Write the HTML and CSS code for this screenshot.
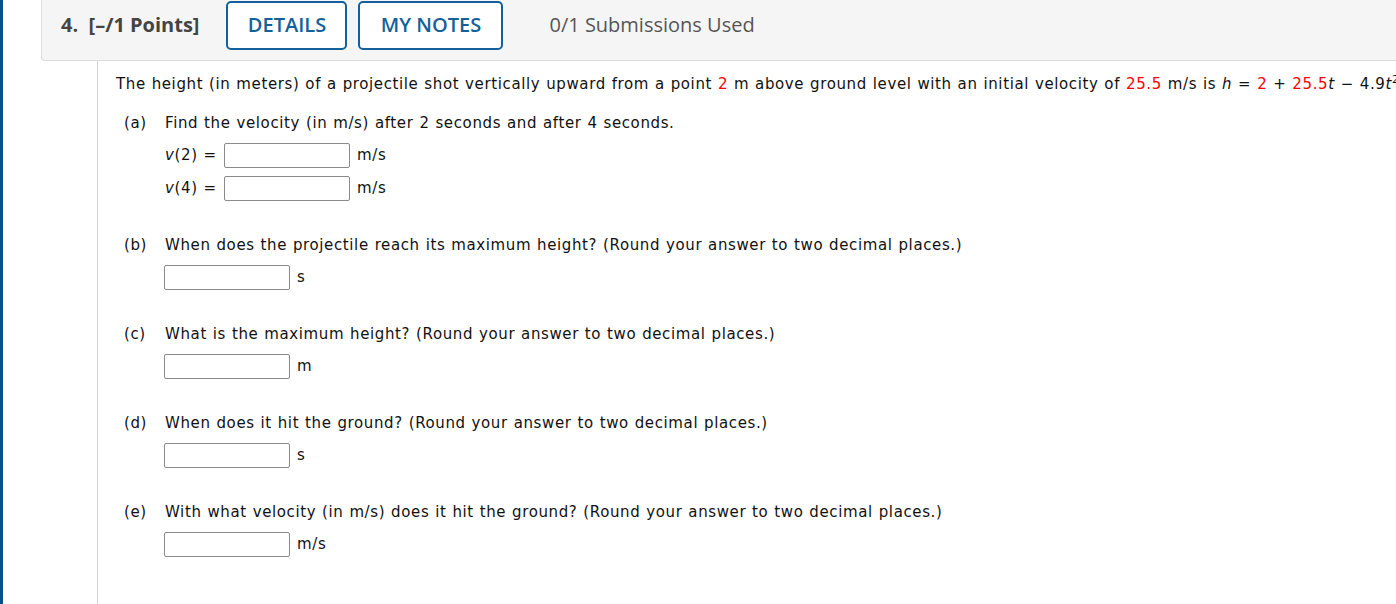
FILE: index.html
```html
<!DOCTYPE html>
<html>
<head>
<meta charset="utf-8">
<link rel="stylesheet" href="styles.css">
</head>
<body>
<div class="page">
  <div class="accent"></div>
  <div class="question">
    <div class="qhead">
      <div class="qnum">4.&nbsp; [–/1 Points]</div>
      <button class="btn btn-details">DETAILS</button>
      <button class="btn btn-notes">MY NOTES</button>
      <div class="subs">0/1 Submissions Used</div>
    </div>
    <div class="qbody">
      <div class="stmt">The height (in meters) of a projectile shot vertically upward from a point <span class="red">2</span> m above ground level with an initial velocity of <span class="red">25.5</span> m/s is <i>h</i> = <span class="red">2</span> + <span class="red">25.5</span><i>t</i> − 4.9<i>t</i><sup>2</sup>.</div>

      <div class="part part-first">
        <div class="plabel">(a)</div>
        <div class="pcontent">
          <div class="ptitle">Find the velocity (in m/s) after 2 seconds and after 4 seconds.</div>
          <div class="arow"><span class="alabel"><i>v</i>(2) =</span><span class="ans"></span><span class="unit">m/s</span></div>
          <div class="arow arow-next"><span class="alabel"><i>v</i>(4) =</span><span class="ans"></span><span class="unit">m/s</span></div>
        </div>
      </div>

      <div class="part">
        <div class="plabel">(b)</div>
        <div class="pcontent">
          <div class="ptitle">When does the projectile reach its maximum height? (Round your answer to two decimal places.)</div>
          <div class="arow"><span class="ans"></span><span class="unit">s</span></div>
        </div>
      </div>

      <div class="part">
        <div class="plabel">(c)</div>
        <div class="pcontent">
          <div class="ptitle">What is the maximum height? (Round your answer to two decimal places.)</div>
          <div class="arow"><span class="ans"></span><span class="unit">m</span></div>
        </div>
      </div>

      <div class="part">
        <div class="plabel">(d)</div>
        <div class="pcontent">
          <div class="ptitle">When does it hit the ground? (Round your answer to two decimal places.)</div>
          <div class="arow"><span class="ans"></span><span class="unit">s</span></div>
        </div>
      </div>

      <div class="part">
        <div class="plabel">(e)</div>
        <div class="pcontent">
          <div class="ptitle">With what velocity (in m/s) does it hit the ground? (Round your answer to two decimal places.)</div>
          <div class="arow"><span class="ans"></span><span class="unit">m/s</span></div>
        </div>
      </div>
    </div>
  </div>
</div>
</body>
</html>
```

FILE: styles.css
```css
html, body {
  margin: 0;
  padding: 0;
  background: #fff;
  overflow: hidden;
}
.page {
  display: flex;
  min-height: 604px;
  width: 1396px;
  overflow: hidden;
}
.accent {
  width: 3px;
  flex: 0 0 3px;
  background: #0c4d82;
}
.question {
  flex: 1;
  margin-left: 38px;
  display: flex;
  flex-direction: column;
  min-width: 0;
}
.qhead {
  display: flex;
  align-items: center;
  height: 48px;
  padding: 1px 0 11px 19px;
  background: #f5f5f5;
  border-left: 1px solid #dedede;
  border-bottom: 1px solid #dedede;
  border-bottom-left-radius: 4px;
  font-family: "Open Sans", sans-serif;
  font-size: 20px;
}
.qnum {
  font-weight: 700;
  color: #444;
  margin-right: 27px;
  margin-bottom: 2px;
  white-space: nowrap;
}
.btn {
  height: 49px;
  box-sizing: border-box;
  border: 2px solid #13609a;
  border-radius: 5px;
  background: #fff;
  color: #13609a;
  font-family: "Open Sans", sans-serif;
  font-size: 20px;
  font-weight: 600;
  padding: 0 0 2px 0;
}
.btn-details { width: 121px; }
.btn-notes { width: 145px; margin-left: 11px; }
.subs {
  margin-left: 46px;
  margin-bottom: 2px;
  color: #555;
  white-space: nowrap;
}
.qbody {
  flex: 1;
  margin-left: 56px;
  border-left: 1px solid #d4d4d4;
  padding: 12px 0 0 18px;
  font-family: Verdana, "DejaVu Sans", sans-serif;
  font-size: 15px;
  line-height: 22px;
  letter-spacing: 0.62px;
  word-spacing: 0.5px;
  color: #111;
  min-width: 0;
}
.stmt {
  white-space: nowrap;
}
.stmt sup {
  font-size: 11px;
  line-height: 0;
}
.red { color: #f00; }
.part {
  display: flex;
  margin-top: 33px;
  padding-left: 8px;
}
.part-first { margin-top: 17px; }
.plabel {
  width: 41px;
  flex: 0 0 41px;
}
.ptitle {
  white-space: nowrap;
}
.arow {
  display: flex;
  align-items: center;
  height: 26px;
  margin-top: 8px;
}
.arow-next { margin-top: 7px; }
.alabel {
  width: 59px;
  flex: 0 0 59px;
}
.ans {
  display: inline-block;
  width: 126px;
  height: 25px;
  box-sizing: border-box;
  border: 1px solid #8a8a8a;
  border-radius: 2px;
  background: #fff;
  margin-left: -1px;
}
.alabel + .ans { margin-left: 0; }
.unit {
  margin-left: 7px;
}
```
